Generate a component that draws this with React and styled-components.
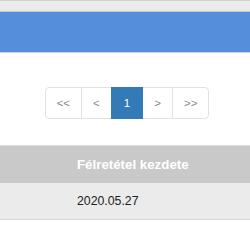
import React from "react";
import styled, { createGlobalStyle } from "styled-components";

const GlobalStyle = createGlobalStyle`
  body {
    margin: 0;
    background: #fff;
    font-family: "Liberation Sans", Arial, sans-serif;
  }
`;

const pages = [
  { label: "<<" },
  { label: "<" },
  { label: "1", active: true },
  { label: ">" },
  { label: ">>" },
];

const App = () => {
  return (
    <>
      <GlobalStyle />
      <Page>
        <TopStrip />
        <Banner />
        <PagerWrap>
          <Pagination>
            {pages.map((p, i) => (
              <PageItem key={i} $active={p.active} $first={i === 0} $last={i === pages.length - 1}>
                {p.label}
              </PageItem>
            ))}
          </Pagination>
        </PagerWrap>
        <Table>
          <HeadRow>
            <Cell />
            <HeadCell>Félretétel kezdete</HeadCell>
          </HeadRow>
          <BodyRow>
            <Cell />
            <DataCell>2020.05.27</DataCell>
          </BodyRow>
        </Table>
      </Page>
    </>
  );
};

export default App;

const Page = styled.div`
  width: 250px;
  height: 250px;
  overflow: hidden;
`;

const TopStrip = styled.div`
  height: 10px;
  background: #ebebeb;
  border-top: 1px solid #d0d0d0;
  border-bottom: 1px solid #c8c8c8;
`;

const Banner = styled.div`
  height: 40px;
  background: #558fdb;
  border-bottom: 1px solid #c6d2e2;
`;

const PagerWrap = styled.div`
  display: flex;
  justify-content: center;
  padding: 34px 0 0 4px;
`;

const Pagination = styled.div`
  display: flex;
`;

const PageItem = styled.div`
  height: 30px;
  line-height: 30px;
  padding: 0 11px;
  font-size: 11.5px;
  color: ${(p) => (p.$active ? "#fff" : "#8a8a8a")};
  background: ${(p) => (p.$active ? "#337ab7" : "#fff")};
  border: 1px solid ${(p) => (p.$active ? "#337ab7" : "#e2e2e2")};
  margin-left: ${(p) => (p.$first ? "0" : "-1px")};
  position: relative;
  z-index: ${(p) => (p.$active ? 2 : 1)};
  border-radius: ${(p) => (p.$first ? "4px 0 0 4px" : p.$last ? "0 4px 4px 0" : "0")};
  ${(p) => p.$active && "padding: 0 12px;"}
`;

const Table = styled.div`
  margin-top: 26px;
  border-top: 1px solid #dcdcdc;
`;

const HeadRow = styled.div`
  display: grid;
  grid-template-columns: 67px 1fr;
  height: 37px;
  background: #c9c9c9;
  align-items: center;
`;

const BodyRow = styled.div`
  display: grid;
  grid-template-columns: 67px 1fr;
  height: 36px;
  background: #ebebeb;
  border-bottom: 1px solid #d8d8d8;
  align-items: center;
`;

const Cell = styled.div``;

const HeadCell = styled.div`
  padding-left: 10px;
  font-size: 13.3px;
  font-weight: bold;
  color: #fff;
  white-space: nowrap;
`;

const DataCell = styled.div`
  padding-left: 10px;
  font-size: 12.3px;
  color: #222;
`;
